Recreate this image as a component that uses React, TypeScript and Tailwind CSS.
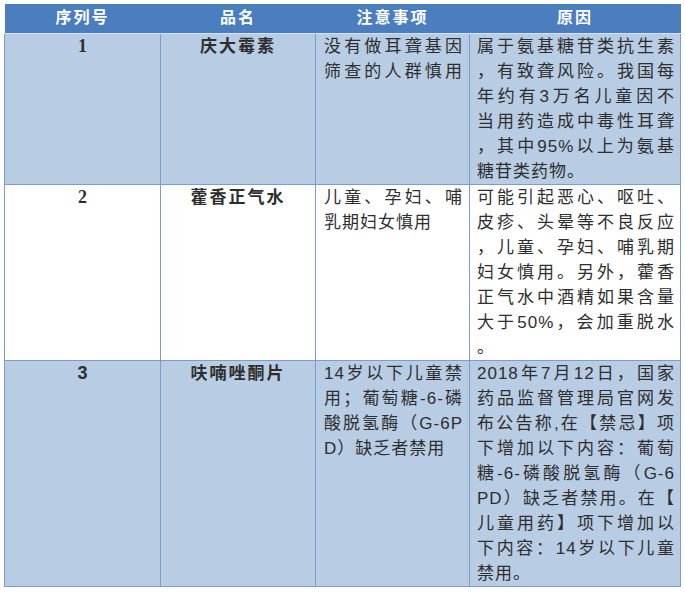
const rows = [
  {
    no: "1",
    noSerif: true,
    name: "庆大霉素",
    note: ["没有做耳聋基因", "筛查的人群慎用"],
    noteFull: [true, true],
    reason: [
      "属于氨基糖苷类抗生素",
      "，有致聋风险。我国每",
      "年约有3万名儿童因不",
      "当用药造成中毒性耳聋",
      "，其中95%以上为氨基",
      "糖苷类药物。",
    ],
    white: false,
  },
  {
    no: "2",
    noSerif: true,
    name: "藿香正气水",
    note: ["儿童、孕妇、哺", "乳期妇女慎用"],
    noteFull: [true, false],
    reason: [
      "可能引起恶心、呕吐、",
      "皮疹、头晕等不良反应",
      "，儿童、孕妇、哺乳期",
      "妇女慎用。另外，藿香",
      "正气水中酒精如果含量",
      "大于50%，会加重脱水",
      "。",
    ],
    white: true,
  },
  {
    no: "3",
    noSerif: false,
    name: "呋喃唑酮片",
    note: ["14岁以下儿童禁", "用；葡萄糖-6-磷", "酸脱氢酶（G-6P", "D）缺乏者禁用"],
    noteFull: [true, true, true, false],
    reason: [
      "2018年7月12日，国家",
      "药品监督管理局官网发",
      "布公告称,在【禁忌】项",
      "下增加以下内容：葡萄",
      "糖-6-磷酸脱氢酶（G-6",
      "PD）缺乏者禁用。在【",
      "儿童用药】项下增加以",
      "下内容：14岁以下儿童",
      "禁用。",
    ],
    white: false,
  },
]

const sans = "font-['Liberation_Sans','Noto_Sans_CJK_SC',sans-serif]"

function Lines({ lines, full }: { lines: string[]; full: boolean[] }) {
  return (
    <div className="text-[17px] leading-[25px] tracking-[1px] text-[#2e2e2e]">
      {lines.map((l, i) => (
        <div
          key={i}
          className={full[i] ? "text-justify [text-align-last:justify]" : "text-left"}
        >
          {l}
        </div>
      ))}
    </div>
  )
}

export default function App() {
  return (
    <div className={`bg-white w-[685px] h-[593px] pt-[4px] pl-[4px] ${sans}`}>
      <table className="border-collapse table-fixed w-[676px]">
        <colgroup>
          <col className="w-[156px]" />
          <col className="w-[155px]" />
          <col className="w-[154px]" />
          <col className="w-[211px]" />
        </colgroup>
        <thead>
          <tr className="bg-[#4b7ebf] h-[29px] text-white text-[16px] font-bold tracking-[2px]">
            <th className="border-b border-b-[#d6e2f0] font-bold">序列号</th>
            <th className="border-b border-b-[#d6e2f0] font-bold">品名</th>
            <th className="border-b border-b-[#d6e2f0] font-bold">注意事项</th>
            <th className="border-b border-b-[#d6e2f0] font-bold">原因</th>
          </tr>
        </thead>
        <tbody>
          {rows.map((r) => {
            const bg = r.white ? "bg-white" : "bg-[#b8cce4]"
            const cell = `border border-[#7c9ccb] align-top ${bg}`
            return (
              <tr key={r.no}>
                <td className={`${cell} text-center`}>
                  <span
                    className={`text-[18px] leading-[25px] font-bold text-[#2e2e2e] ${
                      r.noSerif ? "font-['Liberation_Serif',serif]" : ""
                    }`}
                  >
                    {r.no}
                  </span>
                </td>
                <td className={`${cell} text-center`}>
                  <span className="text-[17px] leading-[25px] font-bold tracking-[2px] text-[#2e2e2e]">
                    {r.name}
                  </span>
                </td>
                <td className={`${cell} pl-[8px] pr-[6px]`}>
                  <Lines lines={r.note} full={r.noteFull} />
                </td>
                <td className={`${cell} pl-[7px] pr-[5px]`}>
                  <Lines
                    lines={r.reason}
                    full={r.reason.map((_, i) => i < r.reason.length - 1)}
                  />
                </td>
              </tr>
            )
          })}
        </tbody>
      </table>
    </div>
  )
}
